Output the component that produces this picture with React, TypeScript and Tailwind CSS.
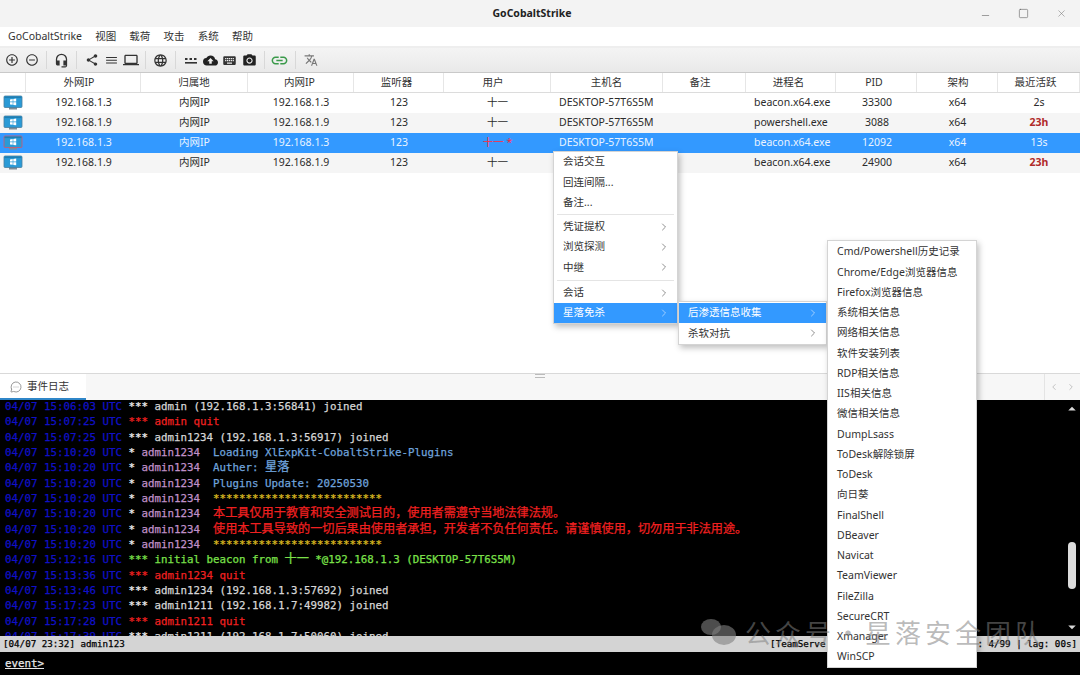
import React from "react";
import {
  MdAddCircleOutline,
  MdRemoveCircleOutline,
  MdHeadsetMic,
  MdShare,
  MdDehaze,
  MdLaptop,
  MdLanguage,
  MdCloudUpload,
  MdKeyboard,
  MdCameraAlt,
  MdLink,
  MdTranslate,
  MdArrowDropDown,
  MdArrowDropUp,
} from "react-icons/md";
import { ChevronLeft, ChevronRight, MessageCircleMore, Minus, Square, X } from "lucide-react";

const cols = "grid grid-cols-[26px_115px_107px_106px_90px_107px_112px_83px_90px_81px_81px_82px]";

const rows = [
  { ip: "192.168.1.3", proc: "beacon.x64.exe", pid: "33300", last: "2s" },
  { ip: "192.168.1.9", proc: "powershell.exe", pid: "3088", last: "23h", alt: true, old: true },
  { ip: "192.168.1.3", proc: "beacon.x64.exe", pid: "12092", last: "13s", sel: true },
  { ip: "192.168.1.9", proc: "beacon.x64.exe", pid: "24900", last: "23h", alt: true, old: true },
];

const heads: [string, string][] = [
  ["", ""],
  ["外网IP", "pr-[8px]"],
  ["归属地", ""],
  ["内网IP", "pr-[2px]"],
  ["监听器", "pr-[4px]"],
  ["用户", "pr-[8px]"],
  ["主机名", ""],
  ["备注", "pr-[8px]"],
  ["进程名", "pr-[4px]"],
  ["PID", "pr-[4px]"],
  ["架构", "pl-[2px]"],
  ["最近活跃", "pr-[6px]"],
];

function Sep() {
  return (
    <div className="w-[10.5px] flex justify-center shrink-0">
      <div className="w-px h-[18px] bg-[#d8d8d8]" />
    </div>
  );
}

function Slot({ children, className }: { children: React.ReactNode; className?: string }) {
  return <div className={`w-[19.5px] flex justify-center shrink-0 ${className ?? ""}`}>{children}</div>;
}

function Pc({ sel }: { sel?: boolean }) {
  return (
    <svg width="20" height="16" viewBox="0 0 20 16">
      <rect x="6" y="12" width="8" height="2.5" fill="#7f8c96" />
      <rect x="1" y="1" width="18" height="11.5" rx="1" fill="#2a9ad6" stroke={sel ? "#d9536a" : "#4a7f9e"} strokeWidth="0.8" />
      <rect x="1.5" y="1.5" width="17" height="1.6" fill="#1f7fb3" />
      <path d="M7 4.4l2.7-.4v2.6H7zM10.3 3.9l2.9-.4v3.1h-2.9zM7 7.2h2.7v2.6L7 9.4zM10.3 7.2h2.9v3.1l-2.9-.4z" fill="#fff" />
    </svg>
  );
}

function Row({ r }: { r: (typeof rows)[number] }) {
  const bg = r.sel ? "bg-[#3399ff] text-[#eaf4ff]" : r.alt ? "bg-[#f5f5f5] text-[#2c2c2c]" : "bg-white text-[#2c2c2c]";
  return (
    <div className={`${cols} ${bg} h-[20px] items-center text-center`}>
      <div className="flex justify-center -ml-[1px]"><Pc sel={r.sel} /></div>
      <div>{r.ip}</div>
      <div>内网IP</div>
      <div>{r.ip}</div>
      <div>123</div>
      <div className={r.sel ? "text-[#ff2a3c]" : ""}>{r.sel ? "十一 *" : "十一"}</div>
      <div className="text-left pl-[8px] whitespace-nowrap">DESKTOP-57T6S5M</div>
      <div></div>
      <div className="text-left pl-[8px] whitespace-nowrap">{r.proc}</div>
      <div className="pl-[1px]">{r.pid}</div>
      <div>x64</div>
      <div className={r.old ? "font-bold text-[#b02a2a]" : ""}>{r.last}</div>
    </div>
  );
}

function MenuItem({ label, arrow, active }: { label: string; arrow?: boolean; active?: boolean }) {
  return (
    <div className={`flex items-center justify-between h-[20.25px] pl-[9px] pr-[7px] ${active ? "bg-[#3399ff] text-white" : "text-[#333]"}`}>
      <span className="whitespace-nowrap">{label}</span>
      {arrow && <ChevronRight size={12} strokeWidth={1.3} className={active ? "text-[#d8ebff]" : "text-[#555]"} />}
    </div>
  );
}

type Seg = [string, string];
const W = "text-[#d6d6d6]";
const B = "text-[#eeeeee]";
const R = "text-[#f02020]";
const P = "text-[#c090c8]";
const L = "text-[#6fa3dc]";
const Y = "text-[#d8b820]";
const G = "text-[#7be04a]";

const joined = (t: string, s: string): { t: string; segs: Seg[] } => ({ t, segs: [[B, " *** "], [W, s]] });
const quit = (t: string, s: string): { t: string; segs: Seg[] } => ({ t, segs: [[R, ` *** ${s}`]] });
const act = (s: string, c: string): { t: string; segs: Seg[] } => ({
  t: "04/07 15:10:20 UTC",
  segs: [[B, " * "], [P, "admin1234  "], [c, s]],
});

const log = [
  joined("04/07 15:06:03 UTC", "admin (192.168.1.3:56841) joined"),
  quit("04/07 15:07:25 UTC", "admin quit"),
  joined("04/07 15:07:25 UTC", "admin1234 (192.168.1.3:56917) joined"),
  act("Loading XlExpKit-CobaltStrike-Plugins", L),
  act("Auther: 星落", L),
  act("Plugins Update: 20250530", L),
  act("**************************", Y),
  act("本工具仅用于教育和安全测试目的，使用者需遵守当地法律法规。", R),
  act("使用本工具导致的一切后果由使用者承担，开发者不负任何责任。请谨慎使用，切勿用于非法用途。", R),
  act("**************************", Y),
  { t: "04/07 15:12:16 UTC", segs: [[G, " *** initial beacon from 十一 *@192.168.1.3 (DESKTOP-57T6S5M)"]] as Seg[] },
  quit("04/07 15:13:36 UTC", "admin1234 quit"),
  joined("04/07 15:13:46 UTC", "admin1234 (192.168.1.3:57692) joined"),
  joined("04/07 15:17:23 UTC", "admin1211 (192.168.1.7:49982) joined"),
  quit("04/07 15:17:28 UTC", "admin1211 quit"),
  joined("04/07 15:17:39 UTC", "admin1211 (192.168.1.7:50060) joined"),
];

function Mixed({ text }: { text: string }) {
  return (
    <>
      {text.split(/([\u4e00-\u9fff，。]+)/).map((p, i) =>
        i % 2 === 1 ? (
          <span key={i} className="text-[12.15px]">{p}</span>
        ) : (
          <React.Fragment key={i}>{p}</React.Fragment>
        ),
      )}
    </>
  );
}

const third = [
  "Cmd/Powershell历史记录",
  "Chrome/Edge浏览器信息",
  "Firefox浏览器信息",
  "系统相关信息",
  "网络相关信息",
  "软件安装列表",
  "RDP相关信息",
  "IIS相关信息",
  "微信相关信息",
  "DumpLsass",
  "ToDesk解除锁屏",
  "ToDesk",
  "向日葵",
  "FinalShell",
  "DBeaver",
  "Navicat",
  "TeamViewer",
  "FileZilla",
  "SecureCRT",
  "Xmanager",
  "WinSCP",
];

const ui = "font-['Noto_Sans','Noto_Sans_CJK_SC',sans-serif] text-[10.5px]";
const mono = "font-['DejaVu_Sans_Mono','Noto_Sans_CJK_SC',monospace] text-[10.8px] [-webkit-text-stroke:0.25px]";
const menuBox = "absolute bg-white border border-[#d4d4d4] shadow-[2px_3px_6px_rgba(0,0,0,0.25)]";

export default function App() {
  return (
    <div className={`relative w-[1080px] h-[675px] overflow-hidden flex flex-col bg-white ${ui}`}>
      {/* title bar */}
      <div className="relative h-[27px] bg-[#f3f3f3] flex items-center justify-center pr-[16px] shrink-0">
        <span className="font-bold text-[#222] pt-[1px]">GoCobaltStrike</span>
        <div className="absolute right-0 top-0 h-[27px] flex items-center text-[#555]">
          <div className="w-[38px] flex justify-center pt-[4px]"><Minus size={11} strokeWidth={1.2} /></div>
          <div className="w-[38px] flex justify-center"><Square size={11} strokeWidth={1.2} /></div>
          <div className="w-[38px] flex justify-center"><X size={11} strokeWidth={1.2} className="text-[#777]" /></div>
        </div>
      </div>
      {/* menu bar */}
      <div className="h-[19px] bg-white flex items-center pl-[8px] gap-[13.2px] text-[#333] shrink-0">
        <span>GoCobaltStrike</span>
        <span>视图</span>
        <span>载荷</span>
        <span>攻击</span>
        <span>系统</span>
        <span>帮助</span>
      </div>
      {/* toolbar */}
      <div className="h-[27px] border-t-2 border-t-[#eeeeee] border-b border-b-[#c9c9c9] bg-gradient-to-b from-[#f4f4f4] to-[#e9e9e9] flex items-center pl-[2.25px] text-[#333] shrink-0">
        <Slot><MdAddCircleOutline size={14} /></Slot>
        <Slot><MdRemoveCircleOutline size={14} /></Slot>
        <Sep />
        <Slot><MdHeadsetMic size={15} /></Slot>
        <Sep />
        <Slot><MdShare size={14} /></Slot>
        <Slot><MdDehaze size={13} /></Slot>
        <Slot><MdLaptop size={16} /></Slot>
        <Sep />
        <Slot><MdLanguage size={15} /></Slot>
        <Sep />
        <Slot>
          <svg width="14" height="14" viewBox="0 0 14 14" fill="#333">
            <rect x="1" y="5" width="2.5" height="2" />
            <rect x="5.5" y="5" width="2.5" height="2" />
            <rect x="10" y="5" width="2.5" height="2" />
            <rect x="1" y="9" width="12" height="1.6" />
          </svg>
        </Slot>
        <Slot><MdCloudUpload size={15} className="text-[#222]" /></Slot>
        <Slot><MdKeyboard size={15} /></Slot>
        <Slot><MdCameraAlt size={15} className="text-[#222]" /></Slot>
        <Sep />
        <Slot className="ml-[0px]"><MdLink size={19} className="text-[#3a9a4a]" /></Slot>
        <div className="ml-[1px]"><Sep /></div>
        <Slot className="ml-[1px]"><MdTranslate size={14} className="text-[#777]" /></Slot>
      </div>
      {/* table */}
      <div className="flex-1 flex flex-col bg-white">
        <div className={`${cols} h-[20px] border-b border-[#dcdcdc] items-center text-[#333] bg-white shrink-0`}>
          {heads.map(([h, pad], i) => (
            <div key={i} className={`h-full flex items-center justify-center border-r border-[#e6e6e6] ${pad}`}>{h}</div>
          ))}
        </div>
        {rows.map((r, i) => (
          <Row key={i} r={r} />
        ))}
      </div>
      {/* splitter + tabs */}
      <div className="h-[27px] border-t border-[#d9d9d9] bg-[#f7f7f7] flex items-stretch shrink-0 relative">
        <div className="absolute left-[535px] top-0 w-[10px] h-[4px] border-y border-[#bbb]" />
        <div className="w-[86px] bg-white border-b-2 border-[#2f86c8] flex items-center pl-[10px] gap-[5px] text-[#333] pt-[1px]">
          <MessageCircleMore size={12} strokeWidth={1.2} className="text-[#555]" />
          <span>事件日志</span>
        </div>
        <div className="flex-1" />
        <div className="w-[36px] border-l border-[#e4e4e4] flex items-center justify-around text-[#b8b8b8]">
          <ChevronLeft size={10} />
          <ChevronRight size={10} />
        </div>
      </div>
      {/* console */}
      <div className={`relative h-[275px] bg-black shrink-0 flex flex-col ${mono}`}>
        <div className="h-[236px] overflow-hidden pl-[5px] whitespace-pre">
          <div className="-mt-[1px]">
            {log.map((l, i) => (
              <div key={i} className="h-[15.35px] leading-[15.35px]">
                <span className="text-[#1010c8]">{l.t}</span>
                {l.segs.map((s, j) => (
                  <span key={j} className={s[0]}><Mixed text={s[1]} /></span>
                ))}
              </div>
            ))}
          </div>
        </div>
        <div className="h-[16px] bg-[#d4d4d4] text-black text-[9.2px] flex items-center pl-[3px] pr-[3px] whitespace-pre shrink-0">
          <span>[04/07 23:32] admin123</span>
          <span className="ml-auto">[TeamServe</span>
          <span className="w-[152px]" />
          <span>: 4/99 | lag: 00s]</span>
        </div>
        <div className="h-[23px] pl-[5px] pt-[1px] flex items-center text-[#e8e8e8] underline">event&gt;</div>
        <div className="absolute left-[1068px] top-[142px] w-[8px] h-[47px] rounded-[4px] bg-[#dcdcdc]" />
        <MdArrowDropUp size={18} className="absolute left-[1063px] top-[0px] text-[#d8d8d8]" />
        <MdArrowDropDown size={18} className="absolute left-[1063px] top-[218px] text-[#d8d8d8]" />
      </div>

      {/* context menus */}
      <div className={`${menuBox} left-[553px] top-[151px] w-[125px]`}>
        <MenuItem label="会话交互" />
        <MenuItem label="回连间隔..." />
        <MenuItem label="备注..." />
        <div className="h-px bg-[#e4e4e4] mx-[3px] my-[1.5px]" />
        <MenuItem label="凭证提权" arrow />
        <MenuItem label="浏览探测" arrow />
        <MenuItem label="中继" arrow />
        <div className="h-px bg-[#e4e4e4] mx-[3px] mt-[2px] mb-[2px]" />
        <MenuItem label="会话" arrow />
        <MenuItem label="星落免杀" arrow active />
      </div>
      <div className={`${menuBox} left-[678px] top-[301px] w-[149px] pt-[1px]`}>
        <MenuItem label="后渗透信息收集" arrow active />
        <MenuItem label="杀软对抗" arrow />
      </div>
      <div className={`${menuBox} left-[827px] top-[240px] w-[150px] pt-[1px]`}>
        {third.map((t) => (
          <MenuItem key={t} label={t} />
        ))}
      </div>

      {/* watermark */}
      <div className="absolute left-[699px] top-[612px] flex items-center gap-[9px] text-[rgba(128,128,128,0.55)] text-[26px] tracking-[4px] font-['Noto_Sans_CJK_SC',sans-serif] whitespace-nowrap pointer-events-none">
        <svg width="37" height="30" viewBox="0 0 37 30" fill="rgba(128,128,128,0.6)">
          <ellipse cx="12" cy="10" rx="10" ry="8" />
          <ellipse cx="25" cy="18" rx="12" ry="10" />
        </svg>
        <span>公众号·星落安全团队</span>
      </div>
    </div>
  );
}
